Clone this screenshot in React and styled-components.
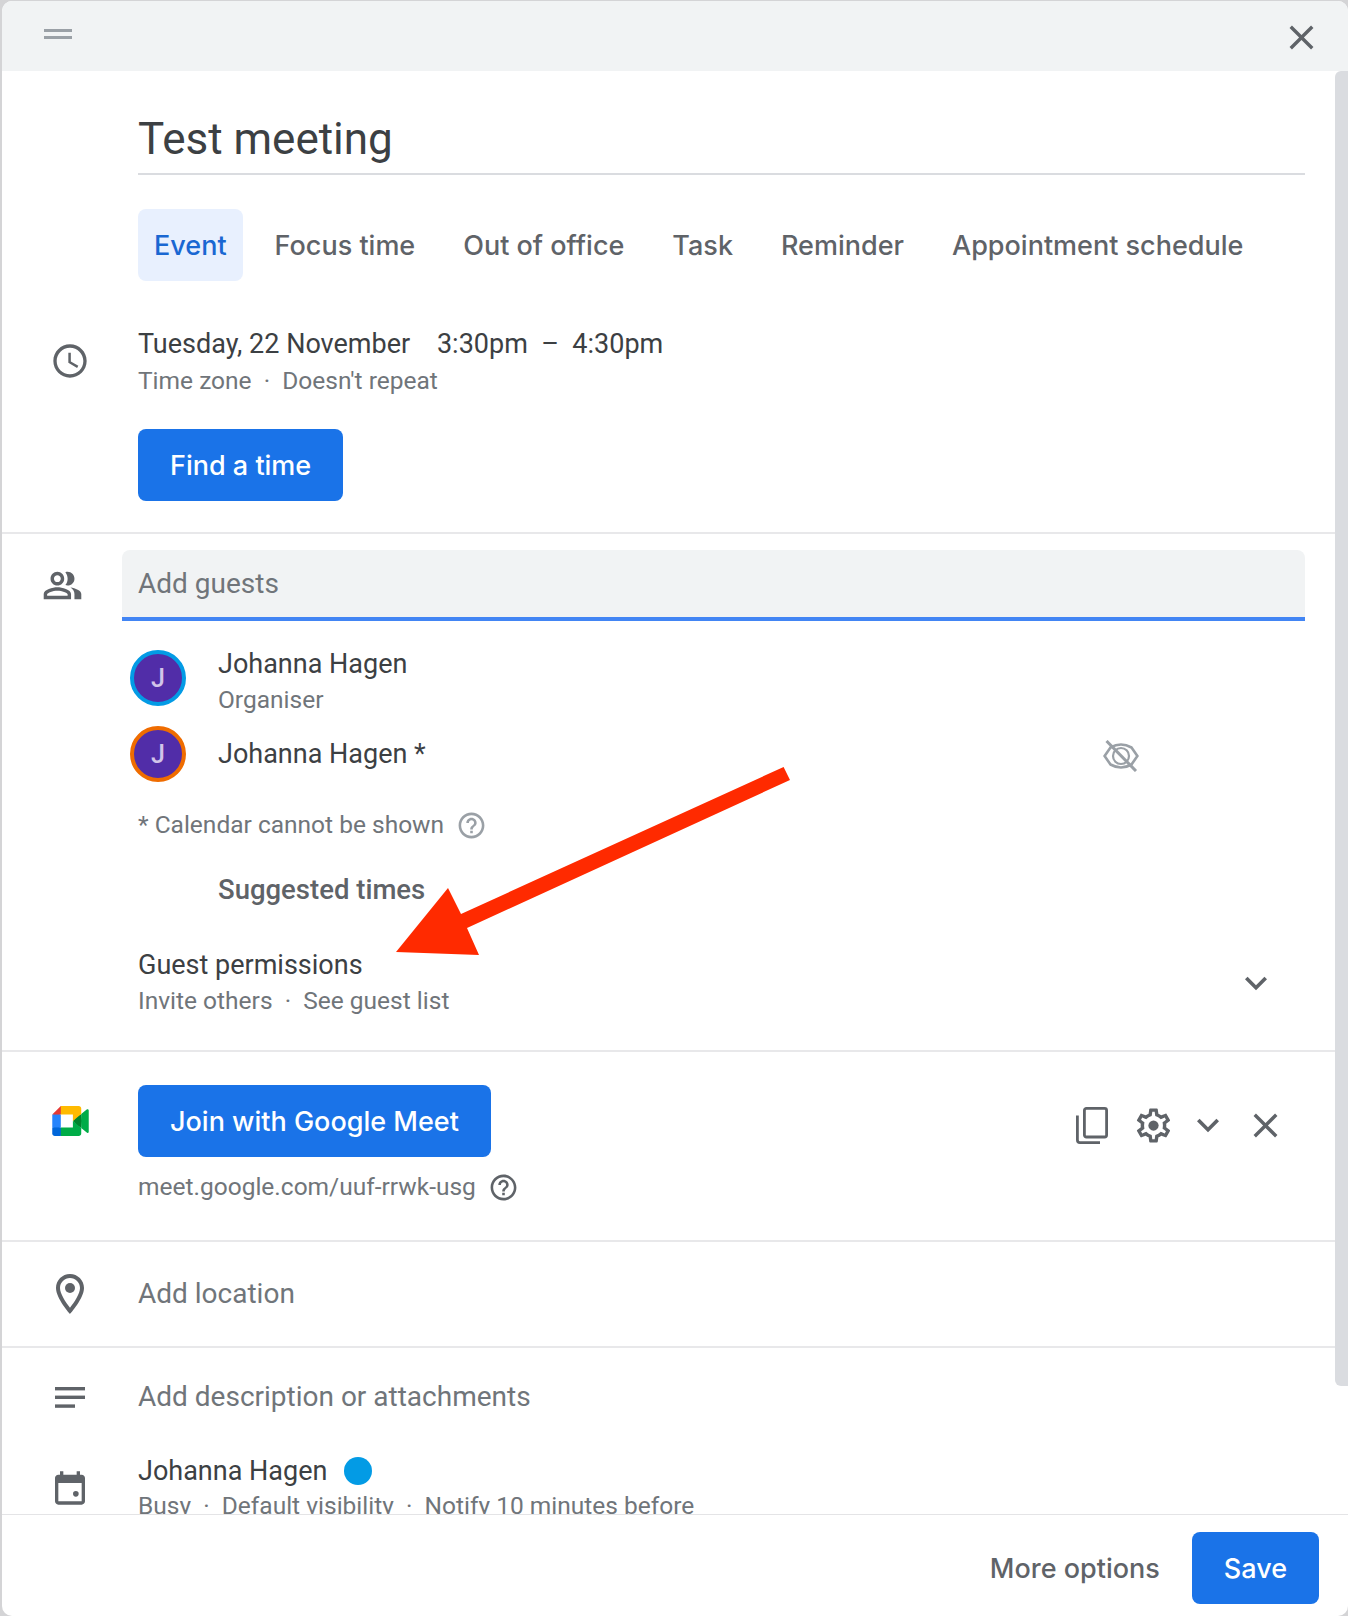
import React from 'react';
import styled, { createGlobalStyle } from 'styled-components';

const GlobalStyle = createGlobalStyle`
  html, body {
    margin: 0;
    padding: 0;
    background: #d4d4d6;
  }
  * { box-sizing: border-box; }
`;

const sans = `Roboto, "Liberation Sans", sans-serif`;
const heading = `Inter, Roboto, sans-serif`;

const Card = styled.div`
  position: relative;
  width: 1346px;
  height: 1615px;
  margin: 1px 0 0 2px;
  display: flex;
  flex-direction: column;
  background: #fff;
  border-radius: 10px;
  overflow: hidden;
  font-family: ${sans};
`;

const TopBar = styled.div`
  flex: none;
  height: 70px;
  background: #f1f3f4;
  display: flex;
  align-items: flex-start;
  justify-content: space-between;
  padding: 16px 26px 0 42px;
`;

const DragHandle = styled.div`
  width: 28px;
  height: 10px;
  margin-top: 12px;
  border-top: 3px solid #9aa0a6;
  border-bottom: 3px solid #9aa0a6;
`;

const Body = styled.div`
  position: relative;
  flex: 1;
  min-height: 0;
  overflow: hidden;
  padding-right: 11px;
`;

const Scrollbar = styled.div`
  position: absolute;
  top: 0;
  right: 0;
  width: 13px;
  height: 1315px;
  background: #dadce0;
  border-radius: 6px 0 0 6px;
`;

const Section = styled.section`
  border-bottom: 2px solid #e8e8ea;
  padding: ${p => p.$padding || '0'};
`;

const TitleRow = styled.div`
  margin: 0 32px 0 136px;
  height: 104px;
  border-bottom: 2px solid #dadce0;
  padding-top: 42px;
  font-family: ${sans};
  font-size: 44px;
  line-height: 52px;
  color: #3c4043;
`;

const Tabs = styled.div`
  display: flex;
  gap: 16px;
  margin: 34px 0 0 136px;
`;

const Tab = styled.div`
  height: 72px;
  padding: 0 16px;
  display: flex;
  align-items: center;
  border-radius: 8px;
  font-family: ${heading};
  font-size: 27px;
  font-weight: 500;
  color: ${p => (p.$active ? '#1967d2' : '#5f6368')};
  background: ${p => (p.$active ? '#e8f0fe' : 'transparent')};
`;

const Row = styled.div`
  display: grid;
  grid-template-columns: 136px 1fr;
  align-items: ${p => p.$align || 'center'};
`;

const IconCell = styled.div`
  display: flex;
  justify-content: center;
  color: #5f6368;
`;

const Icon = styled.svg`
  display: block;
  flex: none;
  fill: currentColor;
`;

const Primary = styled.div`
  font-size: 27px;
  line-height: ${p => p.$lh || 40}px;
  color: #3c4043;
  white-space: pre;
`;

const Secondary = styled.div`
  display: flex;
  align-items: center;
  font-size: 24.5px;
  line-height: ${p => p.$lh || 34}px;
  color: #70757a;
  white-space: pre;
`;

const Placeholder = styled.div`
  font-size: 28px;
  line-height: 40px;
  color: #70757a;
`;

const BlueButton = styled.div`
  display: inline-flex;
  align-items: center;
  height: 72px;
  padding: 0 32px;
  border-radius: 8px;
  background: #1a73e8;
  color: #fff;
  font-family: ${heading};
  font-size: 27px;
  font-weight: 500;
`;

const GuestField = styled.div`
  height: 71px;
  padding-left: 16px;
  display: flex;
  align-items: center;
  background: #f1f3f4;
  border-bottom: 4px solid #4285f4;
  border-radius: 8px 8px 0 0;
  font-size: 28px;
  color: #70757a;
`;

const GuestHead = styled.div`
  display: grid;
  grid-template-columns: 120px 1fr;
  align-items: center;
  margin-right: 32px;
`;

const GuestList = styled.div`
  padding: 29px 0 0 128px;
`;

const GuestRow = styled.div`
  display: flex;
  align-items: flex-start;
  gap: 32px;
  height: ${p => p.$height}px;
`;

const Avatar = styled.div`
  flex: none;
  width: 56px;
  height: 56px;
  border-radius: 50%;
  border: 4px solid ${p => p.$ring};
  background: #512da8;
  display: flex;
  align-items: center;
  justify-content: center;
  color: #d1c4e9;
  font-size: 25px;
  font-weight: 500;
`;

const EyeSlot = styled.div`
  margin-left: auto;
  margin-right: 198px;
  margin-top: 14px;
  color: #9aa0a6;
`;

const Note = styled(Secondary)`
  margin: 26px 0 0 136px;
  gap: 12px;
`;

const Suggested = styled.div`
  margin: 28px 0 0 216px;
  font-size: 27.5px;
  font-weight: 500;
  line-height: 40px;
  color: #5f6368;
`;

const Permissions = styled.div`
  display: flex;
  justify-content: space-between;
  align-items: center;
  margin: 37px 59px 0 136px;
  padding-bottom: 31px;
`;

const MeetActions = styled.div`
  display: flex;
  align-items: center;
  color: #5f6368;
`;

const MeetRow = styled.div`
  display: flex;
  justify-content: space-between;
  align-items: flex-start;
  padding-right: 51px;
`;

const PlaceholderRow = styled(Row)`
  height: ${p => p.$height}px;
`;

const CalendarName = styled.div`
  display: flex;
  align-items: center;
  gap: 17px;
`;

const Dot = styled.span`
  width: 28px;
  height: 28px;
  border-radius: 50%;
  background: #039be5;
`;

const Footer = styled.div`
  flex: none;
  height: 102px;
  padding: 17px 29px 0 0;
  border-top: 1px solid #e4e4e6;
  display: flex;
  justify-content: flex-end;
  gap: 32px;
`;

const TextButton = styled.div`
  height: 72px;
  display: flex;
  align-items: center;
  font-family: ${heading};
  font-size: 27px;
  font-weight: 500;
  color: #5f6368;
`;

const Annotation = styled.svg`
  position: absolute;
  top: 0;
  left: 0;
  width: 1348px;
  height: 1616px;
  pointer-events: none;
`;

const Close = ({ size = 41 }) => (
  <Icon viewBox="0 0 24 24" width={size} height={size}>
    <path d="M19 6.41L17.59 5 12 10.59 6.41 5 5 6.41 10.59 12 5 17.59 6.41 19 12 13.41 17.59 19 19 17.59 13.41 12z" />
  </Icon>
);

const Chevron = () => (
  <Icon viewBox="0 0 24 24" width={44} height={44}>
    <path d="M7.41 8.59L12 13.17l4.59-4.58L18 10l-6 6-6-6z" />
  </Icon>
);

const Help = ({ size = 31 }) => (
  <Icon viewBox="0 0 24 24" width={size} height={size}>
    <path d="M11 18h2v-2h-2v2zm1-16C6.48 2 2 6.48 2 12s4.48 10 10 10 10-4.48 10-10S17.52 2 12 2zm0 18c-4.41 0-8-3.59-8-8s3.59-8 8-8 8 3.59 8 8-3.59 8-8 8zm0-14c-2.21 0-4 1.79-4 4h2c0-1.1.9-2 2-2s2 .9 2 2c0 2-3 1.75-3 5h2c0-2.25 3-2.5 3-5 0-2.21-1.79-4-4-4z" />
  </Icon>
);

const ClockIcon = () => (
  <Icon viewBox="0 0 24 24" width={40} height={40}>
    <path d="M11.99 2C6.47 2 2 6.48 2 12s4.47 10 9.99 10C17.52 22 22 17.52 22 12S17.52 2 11.99 2zM12 20c-4.42 0-8-3.58-8-8s3.58-8 8-8 8 3.58 8 8-3.58 8-8 8zm.5-13H11v6l5.25 3.15.75-1.23-4.5-2.67z" />
  </Icon>
);

const PeopleIcon = () => (
  <Icon viewBox="0 0 24 24" width={41} height={41}>
    <path d="M16.67 13.13C18.04 14.06 19 15.32 19 17v3h4v-3c0-2.18-3.57-3.47-6.33-3.87z" />
    <path d="M15 12c2.21 0 4-1.79 4-4s-1.79-4-4-4c-.47 0-.91.1-1.33.24C14.5 5.27 15 6.58 15 8s-.5 2.73-1.33 3.76c.42.14.86.24 1.33.24z" />
    <path d="M9 12c2.21 0 4-1.79 4-4s-1.79-4-4-4-4 1.79-4 4 1.79 4 4 4zm0-6c1.1 0 2 .9 2 2s-.9 2-2 2-2-.9-2-2 .9-2 2-2z" />
    <path d="M9 13c-2.67 0-8 1.34-8 4v3h16v-3c0-2.66-5.33-4-8-4zm6 5H3v-.99C3.2 16.29 6.3 15 9 15s5.8 1.29 6 2v1z" />
  </Icon>
);

const EyeOffIcon = () => (
  <Icon viewBox="0 0 36 32" width={36} height={32} style={{ fill: 'none' }}>
    <g stroke="currentColor" strokeWidth="2.6">
      <path d="M1.6 16 L7.5 7.5 Q18 1.5 28.5 7.5 L34.4 16 L28.5 24.5 Q18 30.5 7.5 24.5 Z" />
      <path d="M10 16 A8 8 0 0 1 26 16 A8 8 0 0 1 10 16" strokeWidth="2.2" />
      <path d="M3.5 1 L33 31" strokeWidth="3" />
    </g>
  </Icon>
);

const PinIcon = () => (
  <Icon viewBox="0 0 24 24" width={48} height={48}>
    <path d="M12 2C8.13 2 5 5.13 5 9c0 5.25 7 13 7 13s7-7.75 7-13c0-3.87-3.13-7-7-7zM7 9c0-2.76 2.24-5 5-5s5 2.24 5 5c0 2.88-2.88 7.19-5 9.88C9.92 16.21 7 11.85 7 9z" />
    <circle cx="12" cy="9" r="2.5" />
  </Icon>
);

const NotesIcon = () => (
  <Icon viewBox="0 0 30 21" width={30} height={21}>
    <rect x="0" y="0" width="30" height="3.4" />
    <rect x="0" y="8.6" width="30" height="3.4" />
    <rect x="0" y="17.4" width="20" height="3.4" />
  </Icon>
);

const CalendarIcon = () => (
  <Icon viewBox="0 0 24 24" width={40} height={40}>
    <path d="M19 4h-1V2h-2v2H8V2H6v2H5c-1.1 0-2 .9-2 2v14c0 1.1.9 2 2 2h14c1.1 0 2-.9 2-2V6c0-1.1-.9-2-2-2zm0 16H5V9h14v11z" />
    <circle cx="15.5" cy="15.5" r="1.7" />
  </Icon>
);

const CopyIcon = () => (
  <Icon viewBox="0 0 32 37" width={32} height={37} style={{ fill: 'none' }}>
    <g stroke="currentColor" strokeWidth="2.8" strokeLinejoin="round">
      <rect x="8.4" y="1.4" width="22.2" height="28.6" rx="2" />
      <path d="M1.4 8.5 V33 Q1.4 35.6 4 35.6 H24" />
    </g>
  </Icon>
);

const GearIcon = () => (
  <Icon viewBox="0 0 24 24" width={41} height={41}>
    <path d="M19.43 12.98c.04-.32.07-.64.07-.98s-.03-.66-.07-.98l2.11-1.65c.19-.15.24-.42.12-.64l-2-3.46c-.12-.22-.39-.3-.61-.22l-2.49 1c-.52-.4-1.08-.73-1.69-.98l-.38-2.65C14.46 2.18 14.25 2 14 2h-4c-.25 0-.46.18-.49.42l-.38 2.65c-.61.25-1.17.59-1.69.98l-2.49-1c-.23-.09-.49 0-.61.22l-2 3.46c-.13.22-.07.49.12.64l2.11 1.65c-.04.32-.07.65-.07.98s.03.66.07.98l-2.11 1.65c-.19.15-.24.42-.12.64l2 3.46c.12.22.39.3.61.22l2.49-1c.52.4 1.08.73 1.69.98l.38 2.65c.03.24.24.42.49.42h4c.25 0 .46-.18.49-.42l.38-2.65c.61-.25 1.17-.59 1.69-.98l2.49 1c.23.09.49 0 .61-.22l2-3.46c.12-.22.07-.49-.12-.64l-2.11-1.65zM17.45 11.27c.04.31.05.52.05.73 0 .21-.02.43-.05.73l-.14 1.13.89.7 1.08.84-.7 1.21-1.27-.51-1.04-.42-.9.68c-.43.32-.84.56-1.25.73l-1.06.43-.16 1.13-.2 1.35h-1.4l-.19-1.35-.16-1.13-1.06-.43c-.43-.18-.83-.41-1.23-.71l-.91-.7-1.06.43-1.27.51-.7-1.21 1.08-.84.89-.7-.14-1.13c-.03-.31-.05-.54-.05-.74s.02-.43.05-.73l.14-1.13-.89-.7-1.08-.84.7-1.21 1.27.51 1.04.42.9-.68c.43-.32.84-.56 1.25-.73l1.06-.43.16-1.13.2-1.35h1.39l.19 1.35.16 1.13 1.06.43c.43.18.83.41 1.23.71l.91.7 1.06-.43 1.27-.51.7 1.21-1.07.85-.89.7.14 1.13z" />
    <circle cx="12" cy="12" r="3" />
  </Icon>
);

const MeetLogo = () => (
  <Icon viewBox="0 0 87.5 72" width={37} height={30}>
    <path fill="#00832d" d="M49.5 36l8.53 9.75 11.47 7.33 2-17.02-2-16.64-11.69 6.44z" />
    <path fill="#0066da" d="M0 51.5V66c0 3.315 2.685 6 6 6h14.5l3-10.96-3-9.54-9.95-3z" />
    <path fill="#e53935" d="M20.5 0L0 20.5l10.55 3 9.95-3 2.95-9.41z" />
    <path fill="#2684fc" d="M20.5 20.5H0v31h20.5z" />
    <path fill="#00ac47" d="M82.6 8.68L69.5 19.42v33.66l13.16 10.79c1.97 1.54 4.85.135 4.85-2.37V11c0-2.535-2.945-3.925-4.91-2.32zM49.5 36v15.5h-29V72h43c3.315 0 6-2.685 6-6V53.08z" />
    <path fill="#ffba00" d="M63.5 0h-43v20.5h29V36l20-16.57V6c0-3.315-2.685-6-6-6z" />
  </Icon>
);

const tabs = ['Event', 'Focus time', 'Out of office', 'Task', 'Reminder', 'Appointment schedule'];

export default function App() {
  return (
    <>
      <GlobalStyle />
      <Card>
        <TopBar>
          <DragHandle />
          <IconCell>
            <Close />
          </IconCell>
        </TopBar>
        <Body>
          <Section $padding="0 0 31px">
            <TitleRow>Test meeting</TitleRow>
            <Tabs>
              {tabs.map((t, i) => (
                <Tab key={t} $active={i === 0}>{t}</Tab>
              ))}
            </Tabs>
            <Row style={{ marginTop: 43 }}>
              <IconCell>
                <ClockIcon />
              </IconCell>
              <div>
                <Primary>{'Tuesday, 22 November    3:30pm  –  4:30pm'}</Primary>
                <Secondary>Time zone  ·  Doesn't repeat</Secondary>
              </div>
            </Row>
            <Row style={{ marginTop: 31 }}>
              <span />
              <div>
                <BlueButton>Find a time</BlueButton>
              </div>
            </Row>
          </Section>

          <Section $padding="16px 0 0">
            <GuestHead>
              <IconCell>
                <PeopleIcon />
              </IconCell>
              <GuestField>Add guests</GuestField>
            </GuestHead>
            <GuestList>
              <GuestRow $height={76}>
                <Avatar $ring="#039be5">J</Avatar>
                <div>
                  <Primary $lh={28}>Johanna Hagen</Primary>
                  <Secondary $lh={28} style={{ marginTop: 8 }}>Organiser</Secondary>
                </div>
              </GuestRow>
              <GuestRow $height={56}>
                <Avatar $ring="#ef6c00">J</Avatar>
                <Primary $lh={56}>Johanna Hagen *</Primary>
                <EyeSlot>
                  <EyeOffIcon />
                </EyeSlot>
              </GuestRow>
            </GuestList>
            <Note>
              * Calendar cannot be shown
              <IconCell style={{ color: '#9aa0a6' }}>
                <Help />
              </IconCell>
            </Note>
            <Suggested>Suggested times</Suggested>
            <Permissions>
              <div>
                <Primary $lh={36}>Guest permissions</Primary>
                <Secondary $lh={36}>Invite others  ·  See guest list</Secondary>
              </div>
              <IconCell>
                <Chevron />
              </IconCell>
            </Permissions>
          </Section>

          <Section $padding="33px 0 36px">
            <Row $align="start">
              <IconCell style={{ marginTop: 21 }}>
                <MeetLogo />
              </IconCell>
              <MeetRow>
                <div>
                  <BlueButton>Join with Google Meet</BlueButton>
                  <Secondary style={{ marginTop: 13, gap: 12 }}>
                    meet.google.com/uuf-rrwk-usg
                    <IconCell>
                      <Help />
                    </IconCell>
                  </Secondary>
                </div>
                <MeetActions style={{ marginTop: 18 }}>
                  <CopyIcon />
                  <span style={{ width: 25 }} />
                  <GearIcon />
                  <span style={{ width: 12 }} />
                  <Chevron />
                  <span style={{ width: 15 }} />
                  <Close />
                </MeetActions>
              </MeetRow>
            </Row>
          </Section>

          <Section>
            <PlaceholderRow $height={104}>
              <IconCell>
                <PinIcon />
              </IconCell>
              <Placeholder>Add location</Placeholder>
            </PlaceholderRow>
          </Section>

          <Row style={{ marginTop: 29 }}>
            <IconCell>
              <NotesIcon />
            </IconCell>
            <Placeholder>Add description or attachments</Placeholder>
          </Row>
          <Row style={{ marginTop: 36 }}>
            <IconCell>
              <CalendarIcon />
            </IconCell>
            <div>
              <CalendarName>
                <Primary $lh={36}>Johanna Hagen</Primary>
                <Dot />
              </CalendarName>
              <Secondary>Busy  ·  Default visibility  ·  Notify 10 minutes before</Secondary>
            </div>
          </Row>
          <Scrollbar />
        </Body>
        <Footer>
          <TextButton>More options</TextButton>
          <BlueButton>Save</BlueButton>
        </Footer>
      </Card>
      <Annotation viewBox="0 0 1348 1616">
        <path
          fill="#ff2a00"
          d="M783.6 767 L790 780 L467 928 L479 955 L396 952 L448 888 L461 914 Z"
        />
      </Annotation>
    </>
  );
}
